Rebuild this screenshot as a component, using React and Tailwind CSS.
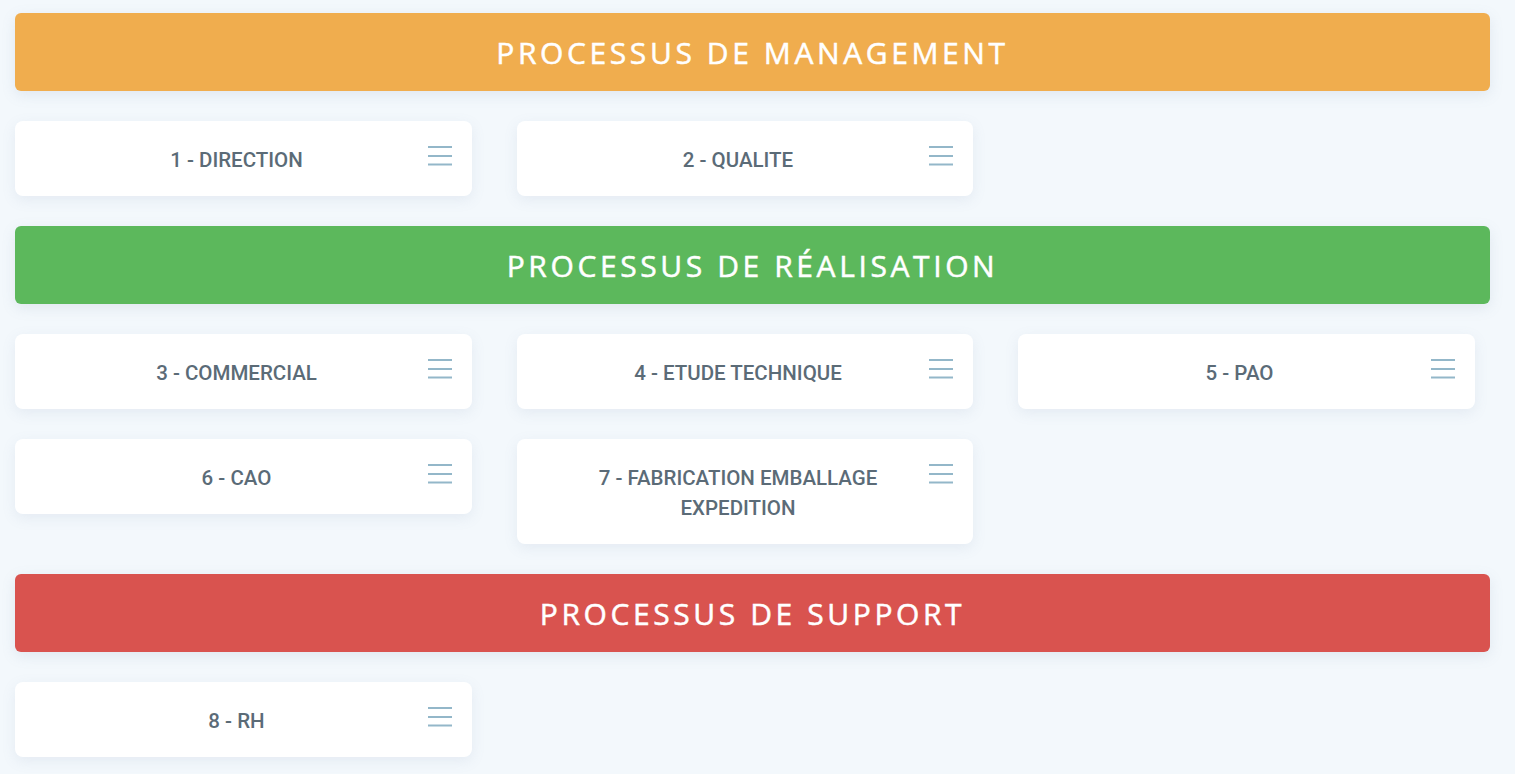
import React from 'react'

const sections = [
  {
    title: 'PROCESSUS DE MANAGEMENT',
    color: 'bg-[#f0ad4e]',
    items: ['1 - DIRECTION', '2 - QUALITE'],
  },
  {
    title: 'PROCESSUS DE RÉALISATION',
    color: 'bg-[#5cb85c]',
    items: ['3 - COMMERCIAL', '4 - ETUDE TECHNIQUE', '5 - PAO', '6 - CAO', '7 - FABRICATION EMBALLAGE EXPEDITION'],
  },
  {
    title: 'PROCESSUS DE SUPPORT',
    color: 'bg-[#d9534f]',
    items: ['8 - RH'],
  },
]

const MenuIcon = () => (
  <svg width="24" height="20" viewBox="0 0 24 20" className="shrink-0">
    <g stroke="#93b7c9" strokeWidth="2">
      <line x1="0" y1="1" x2="24" y2="1" />
      <line x1="0" y1="10" x2="24" y2="10" />
      <line x1="0" y1="18.5" x2="24" y2="18.5" />
    </g>
  </svg>
)

const ProcessCard = ({ label }) => (
  <div className="relative bg-white rounded-[8px] shadow-[0_4px_14px_rgba(120,140,170,0.12)] pt-[24px] pb-[21px] pl-[20px] pr-[34px] flex items-start">
    <div className="flex-1 text-center text-[20.5px] leading-[30px] font-medium text-[#5b6b77] px-6" style={{ fontFamily: 'Roboto, sans-serif' }}>
      {label}
    </div>
    <div className="absolute right-[20px] top-[25px]">
      <MenuIcon />
    </div>
  </div>
)

export default function App() {
  return (
    <div className="min-h-screen bg-[#f3f8fc] pt-[13px] px-[15px] pr-[25px]">
      <div className="flex flex-col gap-[30px]">
        {sections.map((s) => (
          <React.Fragment key={s.title}>
            <div
              className={`${s.color} h-[78px] rounded-[6px] flex items-center justify-center text-white text-[30px] font-normal tracking-[3.6px] [-webkit-text-stroke:0.5px_white] shadow-[0_4px_14px_rgba(120,140,170,0.15)]`}
              style={{ fontFamily: '"Open Sans", sans-serif' }}
            >
              {s.title}
            </div>
            <div className="grid grid-cols-[457px_456px_457px] gap-x-[45px] gap-y-[30px] items-start">
              {s.items.map((it) => (
                <ProcessCard key={it} label={it} />
              ))}
            </div>
          </React.Fragment>
        ))}
      </div>
    </div>
  )
}
